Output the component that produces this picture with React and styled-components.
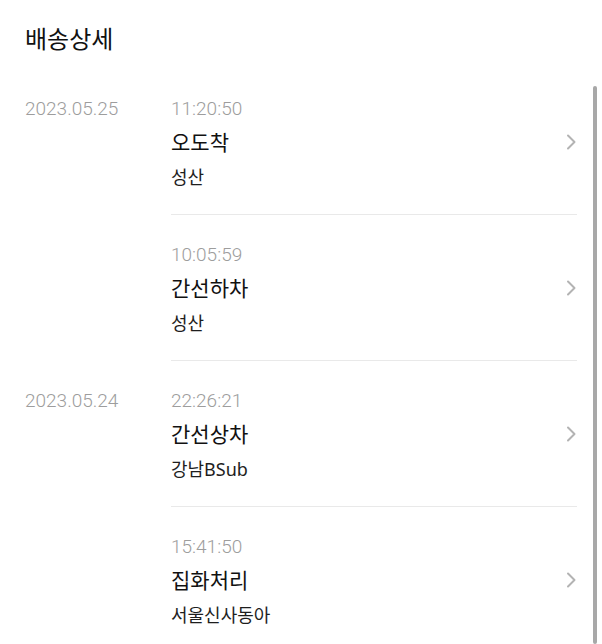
import React from 'react';
import styled, { createGlobalStyle } from 'styled-components';

const GlobalStyle = createGlobalStyle`
  html, body {
    margin: 0;
    padding: 0;
    background: #ffffff;
  }
  body {
    font-family: "Noto Sans", "Noto Sans CJK KR", sans-serif;
    color: #111111;
  }
`;

const Page = styled.div`
  position: relative;
  width: 602px;
  height: 644px;
  overflow: hidden;
  padding: 22px 25px 0 25px;
  box-sizing: border-box;
  background: #ffffff;
`;

const Title = styled.h1`
  margin: 0;
  font-size: 24px;
  line-height: 34px;
  font-weight: 400;
  color: #111111;
`;

const Timeline = styled.div`
  margin-top: 41px;
`;

const DayGroup = styled.div`
  display: grid;
  grid-template-columns: 146px 1fr;
`;

const Digits = styled.div`
  font-family: Roboto, "Noto Sans", sans-serif;
  font-weight: 300;
  font-size: 19px;
  line-height: 24px;
  color: #9d9d9d;
`;

const DateLabel = styled(Digits)`
  padding-top: ${(p) => (p.$first ? '0' : '28px')};
`;

const Events = styled.div`
  display: flex;
  flex-direction: column;
`;

const Event = styled.div`
  padding: ${(p) => (p.$first ? '0' : '28px')} 0 25px 0;
  border-bottom: 1px solid #e9e9e9;
`;

const StatusRow = styled.div`
  display: flex;
  align-items: center;
  justify-content: space-between;
  margin-top: 6px;
`;

const Status = styled.div`
  font-size: 21px;
  line-height: 30px;
  color: #111111;
`;

const Location = styled.div`
  margin-top: 8px;
  font-size: 18px;
  line-height: 24px;
  color: #1e1e1e;
`;

const Scrollbar = styled.div`
  position: absolute;
  top: 86px;
  bottom: 0;
  right: 5px;
  width: 4px;
  border-radius: 2px;
  background: #a8a8a8;
`;

const Chevron = () => (
  <svg width="12" height="16" viewBox="0 0 12 16" fill="none">
    <path d="M3 1.5 L9.5 8 L3 14.5" stroke="#b3b3b3" strokeWidth="2" strokeLinecap="round" strokeLinejoin="round" />
  </svg>
);

const days = [
  {
    date: '2023.05.25',
    events: [
      { time: '11:20:50', status: '오도착', place: '성산' },
      { time: '10:05:59', status: '간선하차', place: '성산' },
    ],
  },
  {
    date: '2023.05.24',
    events: [
      { time: '22:26:21', status: '간선상차', place: '강남BSub' },
      { time: '15:41:50', status: '집화처리', place: '서울신사동아' },
    ],
  },
];

export default function App() {
  return (
    <>
      <GlobalStyle />
      <Page>
        <Title>배송상세</Title>
        <Timeline>
          {days.map((day, di) => (
            <DayGroup key={day.date}>
              <DateLabel $first={di === 0}>{day.date}</DateLabel>
              <Events>
                {day.events.map((ev, ei) => (
                  <Event key={ev.time} $first={di === 0 && ei === 0}>
                    <Digits>{ev.time}</Digits>
                    <StatusRow>
                      <Status>{ev.status}</Status>
                      <Chevron />
                    </StatusRow>
                    <Location>{ev.place}</Location>
                  </Event>
                ))}
              </Events>
            </DayGroup>
          ))}
        </Timeline>
        <Scrollbar />
      </Page>
    </>
  );
}
